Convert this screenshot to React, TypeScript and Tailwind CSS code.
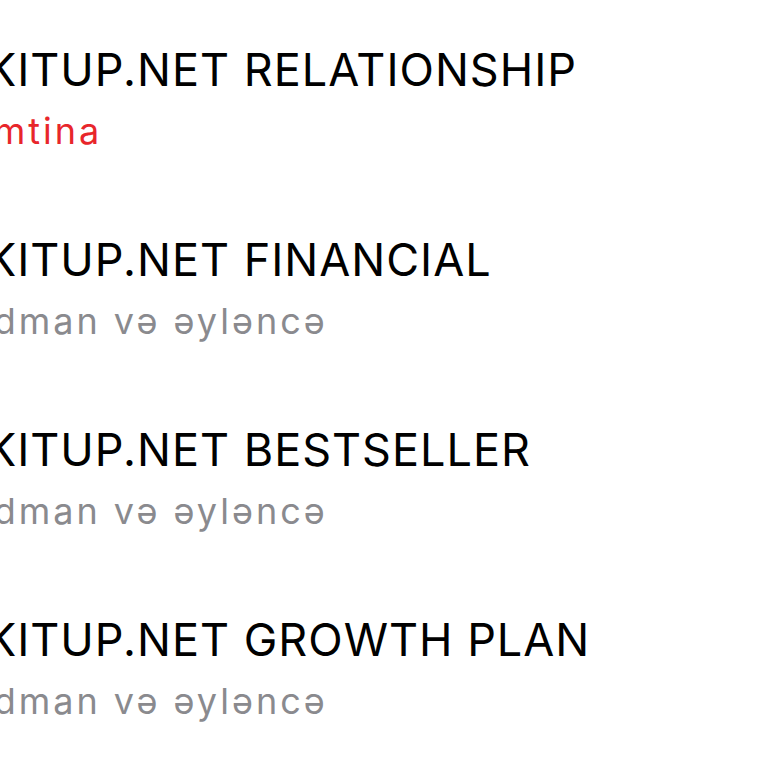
import React from 'react';

const items = [
  { title: 'KITUP.NET RELATIONSHIP', subtitle: 'İmtina', cancelled: true },
  { title: 'KITUP.NET FINANCIAL', subtitle: 'İdman və əyləncə', cancelled: false },
  { title: 'KITUP.NET BESTSELLER', subtitle: 'İdman və əyləncə', cancelled: false },
  { title: 'KITUP.NET GROWTH PLAN', subtitle: 'İdman və əyləncə', cancelled: false },
];

const App: React.FC = () => {
  return (
    <div className="w-[768px] h-[768px] overflow-hidden bg-white font-['Inter',sans-serif]">
      <div className="flex flex-col gap-[82px] pt-[43px] ml-[-14px]">
        {items.map((item, index) => (
          <div key={index} className="flex flex-col gap-[14px] whitespace-nowrap">
            <div className="text-[45px] leading-[54px] text-black tracking-[1px]">{item.title}</div>
            <div
              className={`ml-[-5px] text-[36px] leading-[40px] tracking-[3px] ${
                item.cancelled ? 'text-[#e8262b]' : 'text-[#8a8a8e]'
              }`}
            >
              {item.subtitle}
            </div>
          </div>
        ))}
      </div>
    </div>
  );
};

export default App;
